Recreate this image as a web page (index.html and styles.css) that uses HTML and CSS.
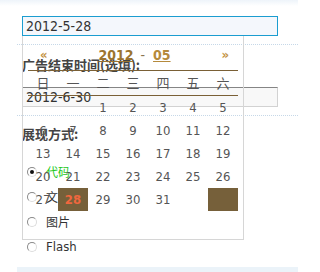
FILE: index.html
```html
<!DOCTYPE html>
<html>
<head>
<meta charset="utf-8">
<link rel="stylesheet" href="styles.css">
</head>
<body>
<div class="topbar"></div>
<div class="main">
  <div class="field first">
    <div class="anchor">
      <div class="txt active">2012-5-28</div>
      <div class="cal">
        <div class="cal-head">
          <span class="nav prev">«</span>
          <span class="ym"><u class="year">2012</u><span class="dash">-</span><u class="month">05</u></span>
          <span class="nav next">»</span>
        </div>
        <div class="week">
          <span>日</span><span>一</span><span>二</span><span>三</span><span>四</span><span>五</span><span>六</span>
        </div>
        <div class="days">
          <span></span><span></span><span>1</span><span>2</span><span>3</span><span>4</span><span>5</span>
          <span>6</span><span>7</span><span>8</span><span>9</span><span>10</span><span>11</span><span>12</span>
          <span>13</span><span>14</span><span>15</span><span>16</span><span>17</span><span>18</span><span>19</span>
          <span>20</span><span>21</span><span>22</span><span>23</span><span>24</span><span>25</span><span>26</span>
          <span>27</span><span class="sel">28</span><span>29</span><span>30</span><span>31</span><span></span><span class="mark"></span>
        </div>
      </div>
    </div>
  </div>
  <div class="field sep second">
    <div class="label l1">广告结束时间(选填):</div>
    <div class="txt plain">2012-6-30</div>
  </div>
  <div class="field sep third">
    <div class="label l2">展现方式:</div>
    <div class="radios">
      <div class="radio-row"><span class="radio checked"></span><span class="rlabel green">代码</span></div>
      <div class="radio-row"><span class="radio"></span><span class="rlabel">文字</span></div>
      <div class="radio-row"><span class="radio"></span><span class="rlabel">图片</span></div>
      <div class="radio-row"><span class="radio"></span><span class="rlabel latin">Flash</span></div>
    </div>
  </div>
  <div class="bottombar"></div>
</div>
</body>
</html>
```
FILE: styles.css
```css
html, body {
  margin: 0;
  padding: 0;
}
body {
  width: 298px;
  height: 272px;
  overflow: hidden;
  background: #fff;
  font-family: "DejaVu Sans Condensed", "DejaVu Sans", "Noto Sans CJK SC", sans-serif;
  color: #333;
}
.topbar {
  height: 6px;
  background: linear-gradient(#eef4fa, #ffffff);
}
.main {
  padding-left: 17px;
}
.field {
  padding-left: 5px;
  padding-bottom: 8px;
}
.first {
  padding-top: 10px;
}
.sep {
  border-top: 1px dotted #c6d8e8;
}
.anchor {
  position: relative;
  width: 256px;
}
.txt {
  box-sizing: border-box;
  width: 256px;
  height: 20px;
  padding-left: 3px;
  font-size: 14px;
  line-height: 18px;
  color: #333;
}
.txt.active {
  border: 1px solid #1b9dd0;
  background: #f4f7fc;
}
.txt.plain {
  border: 1px solid #d2d2d2;
  border-top-color: #858585;
  background: #f8f8f8;
}
.label {
  font-family: "Noto Sans CJK SC", sans-serif;
  font-weight: bold;
  font-size: 13px;
  line-height: 16px;
  color: #444;
}
.l1 {
  margin-top: 12px;
  margin-bottom: 14px;
}
.l2 {
  margin-top: 10px;
}
.radios {
  margin-top: 17px;
}
.radio-row {
  display: flex;
  align-items: center;
  height: 25px;
}
.radio {
  box-sizing: border-box;
  width: 10px;
  height: 10px;
  margin-left: 5px;
  border-radius: 50%;
  border: 1px solid #8a8a8a;
  border-right-color: #dcdcdc;
  border-bottom-color: #dcdcdc;
  background: #fff;
  position: relative;
}
.radio.checked::after {
  content: "";
  position: absolute;
  left: 2px;
  top: 2px;
  width: 4px;
  height: 4px;
  border-radius: 50%;
  background: #111;
}
.rlabel {
  margin-left: 9px;
  font-family: "Noto Sans CJK SC", sans-serif;
  font-size: 12px;
  color: #333;
}
.rlabel.green {
  color: #22c822;
}
.rlabel.latin {
  font-family: "DejaVu Sans Condensed", "DejaVu Sans", sans-serif;
  font-size: 13px;
}
.bottombar {
  height: 6px;
  background: #ebf3f9;
}

/* calendar popup */
.cal {
  position: absolute;
  left: 0;
  top: 100%;
  box-sizing: border-box;
  width: 222px;
  height: 204px;
  border: 1px solid #d6d6d6;
  border-top: none;
  padding: 0 5px;
  z-index: 2;
}
.cal-head {
  box-sizing: border-box;
  height: 35px;
  padding-top: 11px;
  border-bottom: 1px solid #7a6036;
  display: grid;
  grid-template-columns: auto 1fr auto;
  align-items: start;
  line-height: 16px;
  font-size: 14px;
  font-weight: bold;
}
.nav {
  color: #c49344;
  font-size: 13px;
}
.prev {
  padding-left: 12px;
}
.next {
  padding-right: 9px;
}
.ym {
  display: flex;
  justify-content: center;
}
.year {
  color: #9c7430;
}
.month {
  color: #b58a3c;
}
.dash {
  color: #8a7350;
  font-weight: normal;
  margin: 0 8px 0 7px;
}
.week {
  box-sizing: border-box;
  height: 25px;
  border-bottom: 1px solid #7a6036;
  display: grid;
  grid-template-columns: repeat(7, 30px);
  font-family: "Noto Sans CJK SC", sans-serif;
  font-size: 13px;
  line-height: 24px;
  color: #555;
  text-align: center;
}
.days {
  display: grid;
  grid-template-columns: repeat(7, 30px);
  grid-auto-rows: 23px;
  font-size: 13px;
  line-height: 23px;
  color: #555;
  text-align: center;
}
.days .sel {
  background: #76603a;
  color: #f0673e;
  font-weight: bold;
}
.days .mark {
  background: #76603a;
}
```
